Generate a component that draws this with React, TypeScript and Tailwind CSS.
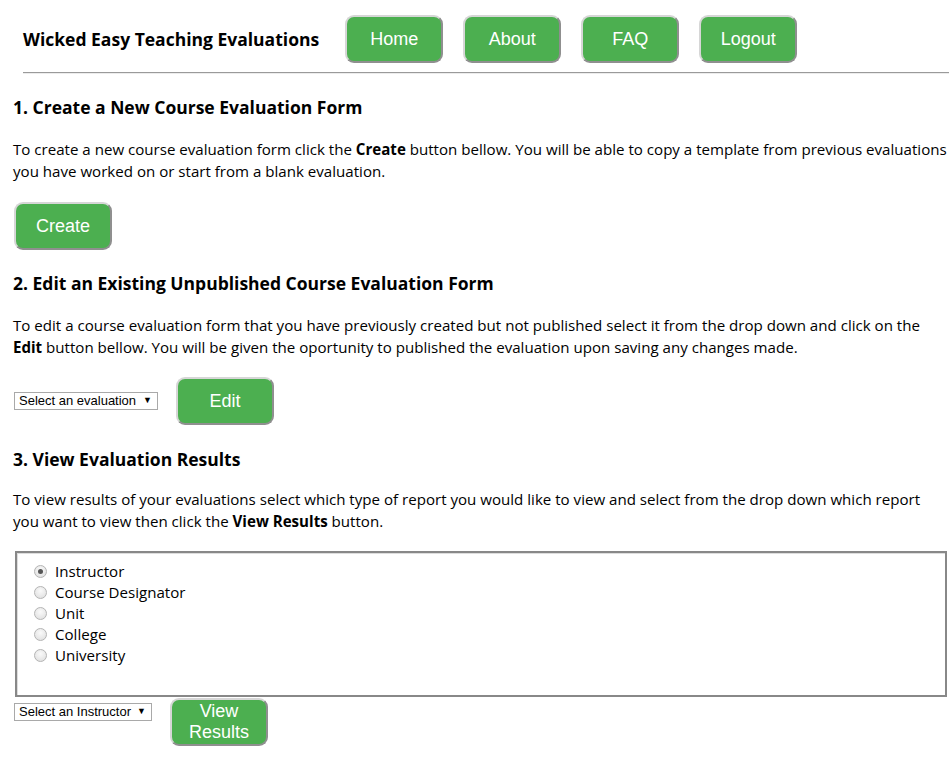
import React from "react"

const navItems = ["Home", "About", "FAQ", "Logout"]

function GreenButton({ children, className = "" }: { children: React.ReactNode; className?: string }) {
  return (
    <button
      className={`w-[98px] h-[48px] rounded-[9px] bg-[#4caf50] text-white text-[18px] leading-[21px] font-['Liberation_Sans',Arial,sans-serif] border-2 border-t-[#d6d6d6] border-l-[#d6d6d6] border-b-[#8f8f8f] border-r-[#8f8f8f] shrink-0 ${className}`}
    >
      {children}
    </button>
  )
}

function FakeSelect({ label, width }: { label: string; width: string }) {
  return (
    <div
      className={`${width} h-[18px] border border-[#a9a9a9] bg-white flex items-center justify-between pl-[4px] pr-[5px] text-[13px] text-black font-['Liberation_Sans',Arial,sans-serif] shrink-0`}
    >
      <span>{label}</span>
      <span className="text-[9px]">▼</span>
    </div>
  )
}

function Radio({ label, checked = false }: { label: string; checked?: boolean }) {
  return (
    <div className="flex items-center h-[21px]">
      <span className="w-[13px] h-[13px] rounded-full border border-[#b4b4b4] bg-[radial-gradient(circle_at_50%_35%,#fafafa,#dcdcdc)] flex items-center justify-center mr-[8px]">
        {checked && <span className="w-[5px] h-[5px] rounded-full bg-[#555]" />}
      </span>
      <span>{label}</span>
    </div>
  )
}

export default function App() {
  return (
    <div className="min-h-screen bg-white overflow-hidden text-black font-['Open_Sans','Noto_Sans',sans-serif] text-[15.1px]">
      <header className="flex items-center pt-[15px] pl-[23px]">
        <h1 className="text-[17.5px] font-bold mr-[26px] whitespace-nowrap">Wicked Easy Teaching Evaluations</h1>
        <nav className="flex gap-[20px]">
          {navItems.map((item) => (
            <GreenButton key={item}>{item}</GreenButton>
          ))}
        </nav>
      </header>
      <div className="ml-[23px] mt-[9px] border-t border-t-[#9a9a9a] border-b border-b-[#ececec]" />

      <main className="pl-[13px]">
        <h2 className="text-[17.5px] font-bold leading-[24px] mt-[21px]">1. Create a New Course Evaluation Form</h2>
        <p className="leading-[22px] mt-[19px] whitespace-nowrap">
          To create a new course evaluation form click the <b>Create</b> button bellow. You will be able to copy a template from previous evaluations
          <br />
          you have worked on or start from a blank evaluation.
        </p>
        <GreenButton className="mt-[20px] ml-px">Create</GreenButton>

        <h2 className="text-[17.5px] font-bold leading-[24px] mt-[21px]">2. Edit an Existing Unpublished Course Evaluation Form</h2>
        <p className="leading-[22px] mt-[19px] whitespace-nowrap">
          To edit a course evaluation form that you have previously created but not published select it from the drop down and click on the
          <br />
          <b>Edit</b> button bellow. You will be given the oportunity to published the evaluation upon saving any changes made.
        </p>
        <div className="flex items-center gap-[18px] mt-[19px] ml-px">
          <FakeSelect label="Select an evaluation" width="w-[144px]" />
          <GreenButton>Edit</GreenButton>
        </div>

        <h2 className="text-[17.5px] font-bold leading-[24px] mt-[22px]">3. View Evaluation Results</h2>
        <p className="leading-[22px] mt-[17px] whitespace-nowrap">
          To view results of your evaluations select which type of report you would like to view and select from the drop down which report
          <br />
          you want to view then click the <b>View Results</b> button.
        </p>
        <div className="ml-[2px] mr-[2px] mt-[19px] h-[146px] border-2 border-[#888] shadow-[inset_1px_1px_0_#ddd] pl-[17px] pt-[8px]">
          <Radio label="Instructor" checked />
          <Radio label="Course Designator" />
          <Radio label="Unit" />
          <Radio label="College" />
          <Radio label="University" />
        </div>
        <div className="flex items-start gap-[18px] mt-px ml-px">
          <FakeSelect label="Select an Instructor" width="w-[138px] mt-[5px]" />
          <GreenButton>
            View
            <br />
            Results
          </GreenButton>
        </div>
      </main>
    </div>
  )
}
